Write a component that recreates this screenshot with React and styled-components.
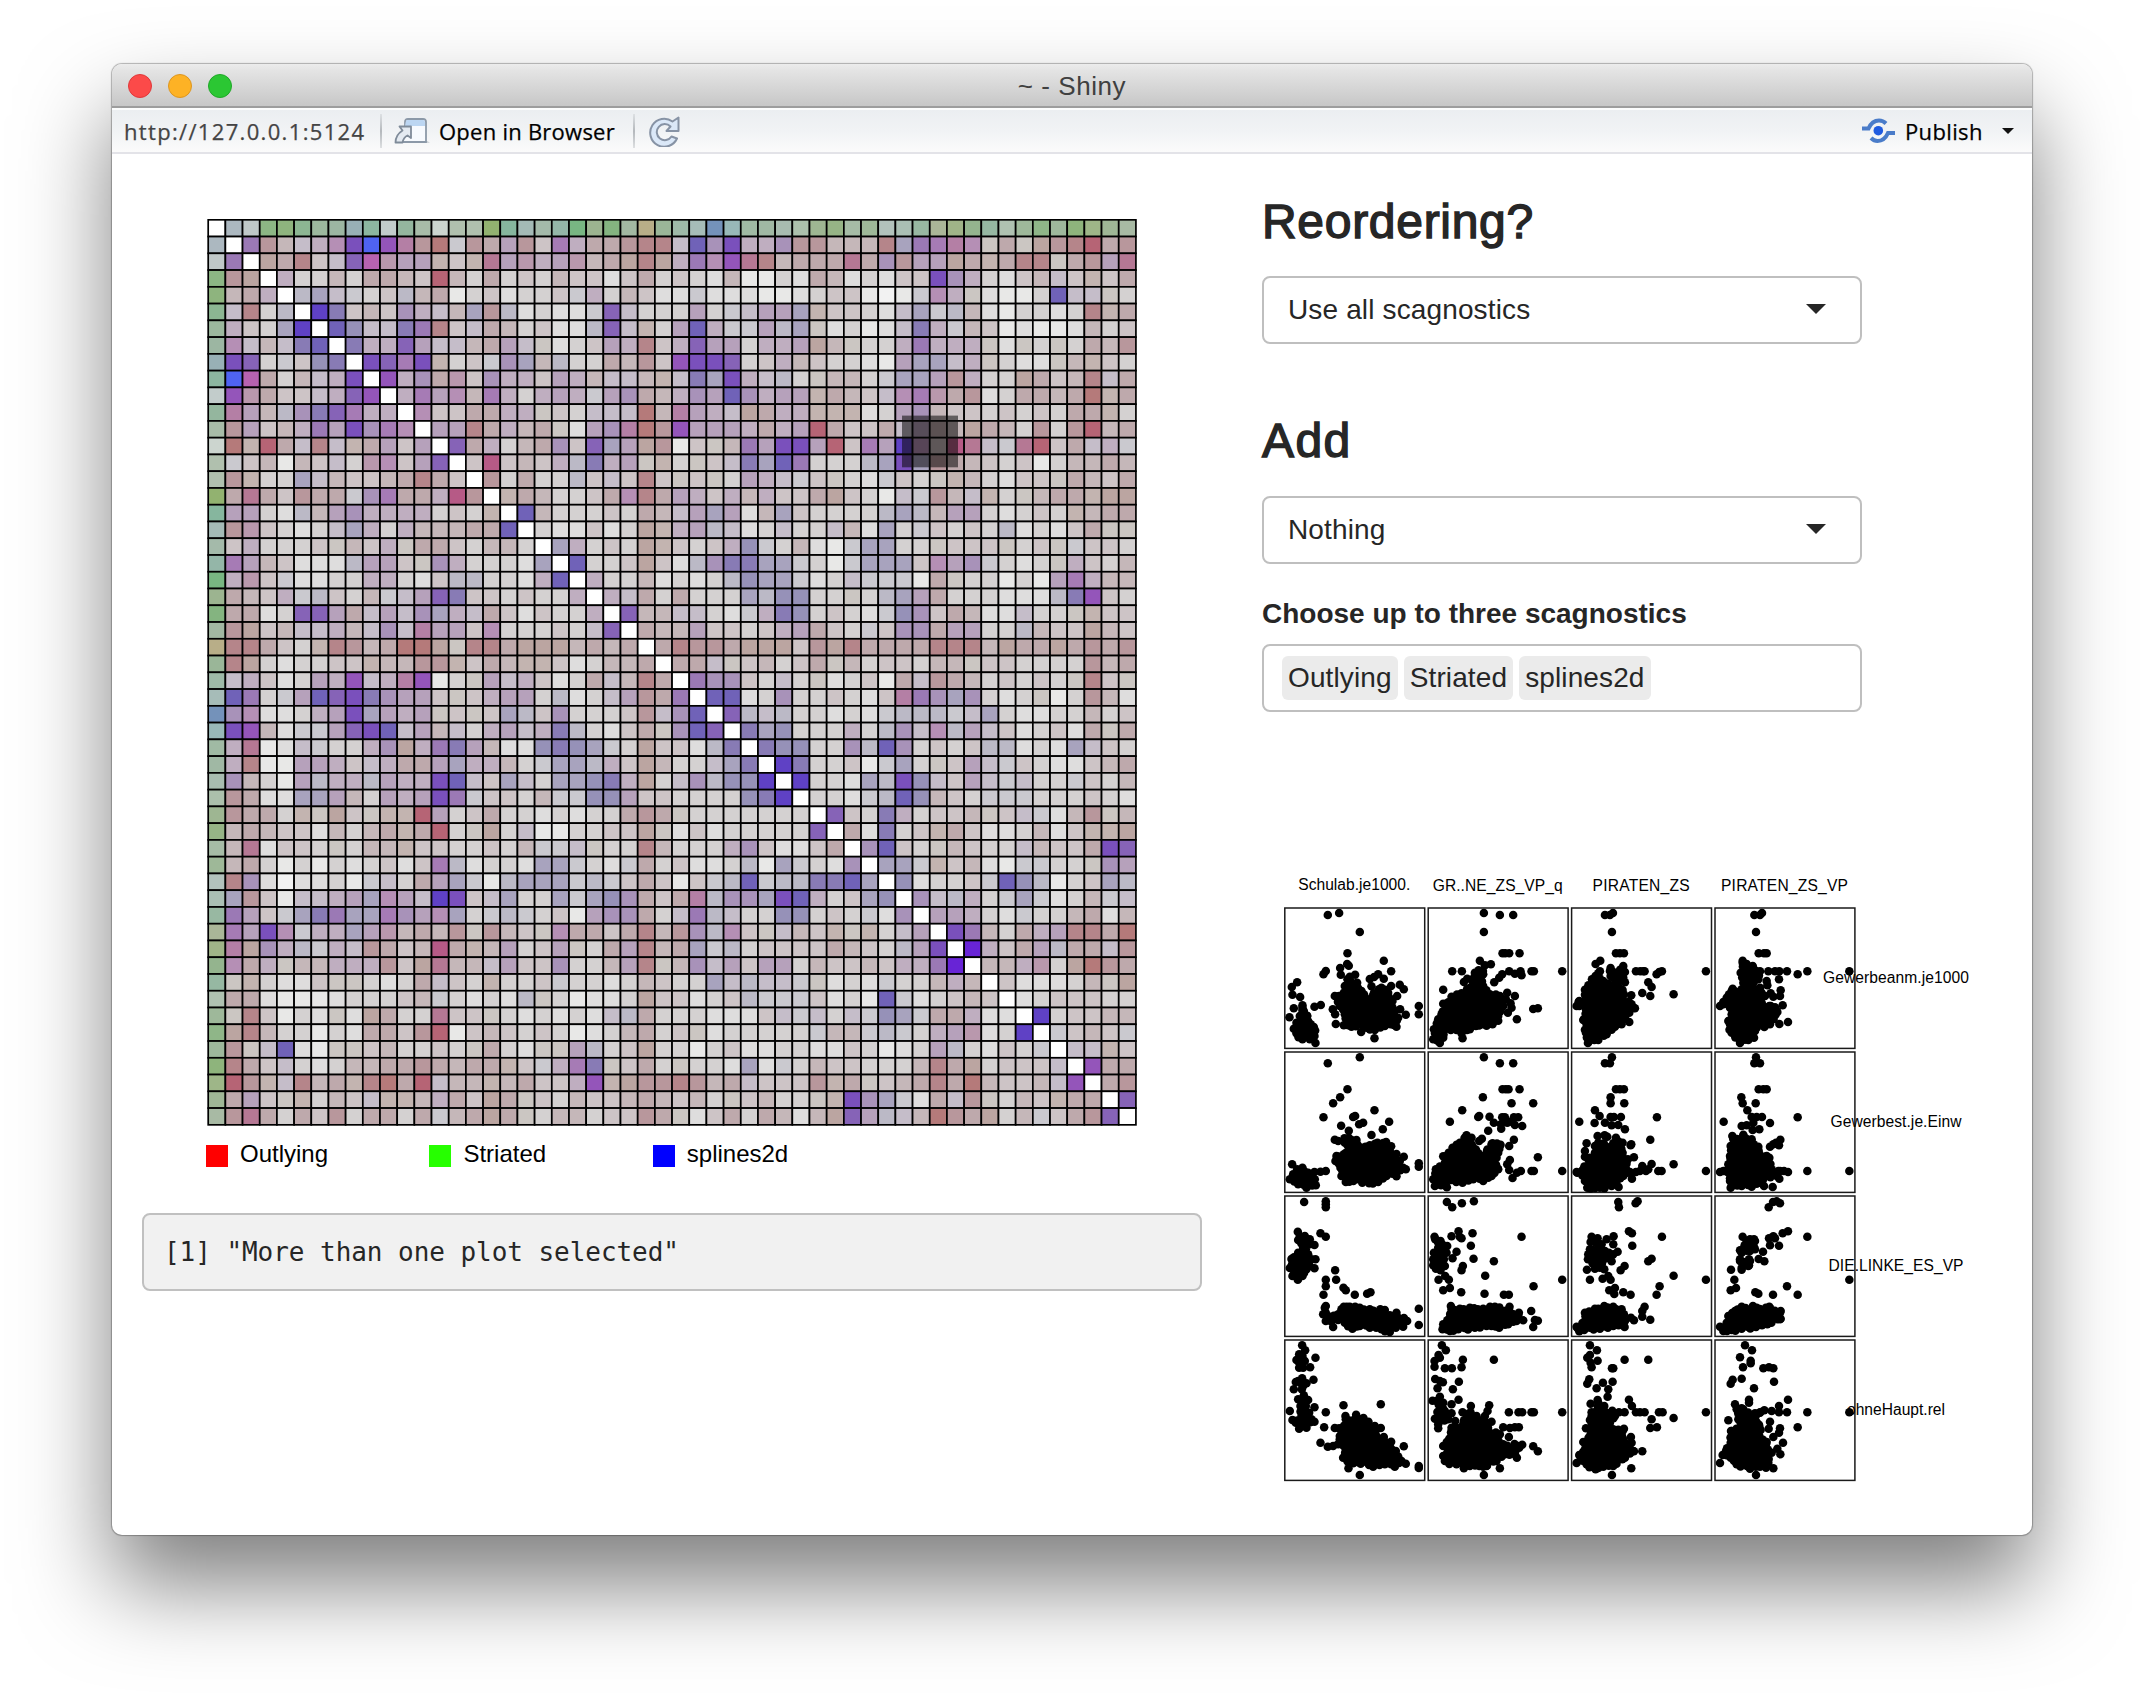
import React from "react";
import styled, { createGlobalStyle } from "styled-components";

const GlobalStyle = createGlobalStyle`
  * { box-sizing: border-box; }
  html, body { margin: 0; padding: 0; background: #fff; }
  body { width: 2144px; height: 1696px; overflow: hidden; font-family: "Liberation Sans", Arial, sans-serif; }
  svg { display: block; flex: none; }
`;

/* ---------- heat map data ---------- */

const palette = {
  O: "#f2f2f2", w: "#e8e8e7", e: "#dedddd", d: "#d4d1d1", l: "#cac9cf", c: "#cdc4c6", g: "#cbc6c2",
  k: "#c5bdc9", t: "#bbb9c6", b: "#c5b7b9", y: "#c3b4b0", a: "#bea9ac", z: "#bba5a1", j: "#bfaec0",
  h: "#b6a1bb", r: "#b8979c", q: "#b5858a", Q: "#b57a7a", R: "#b66475", m: "#a892b9", n: "#9b79b5",
  o: "#b58fb5", M: "#b47fa5", F: "#b57894", f: "#b998ad", s: "#a8a3be", u: "#9691b8", x: "#887bb5",
  v: "#8663b7", V: "#7a50bc", i: "#7062b8", I: "#5f41c5", Z: "#9455ba", P: "#b65a86", B: "#4f63f2",
  p: "#a67bb5", W: "#b762b0", X: "#6824d6",
};

const firstRow = (
  "acb8c0 c0c8c8 8cb684 8eb47e 8cb692 9cb89e 9cb6a2 98b0b6 8cb6a0 c2cccb 94b69e a8bca8 ccd5cf b0c0ae " +
  "b0c0ae 92b270 86b69e a4bab6 a4baaa 94b6a8 78b682 9cb490 84b480 a2b8a2 b8ae88 9ab698 9ebaa8 a6bcb8 " +
  "7492ba 98b8b8 a0baa4 a0b8a4 a8bcb0 acc0ac 9eb692 96b486 a6bca6 9eb898 b2c2bc aabfb4 98b8a2 aab698 " +
  "a0b488 94b48e 96b8a2 afc1b1 9eb89a 8fb688 9eb89c 8eb47c 9eb688 9fb796 a8baa4"
).split(" ");

/* upper triangle, row 1 onwards; every row starts right of the diagonal */
const triangle = [
  "nrbkjoVBZMrQlrahrcpjaarqqkimVjjmrrbbbqsnpMogagzrqRar",
  "zaqckvWfhhycyFhfjhfbazqzjnoZFqbaaaFamrhhzayaqqgarhF",
  "jddbdaabcRbdadcdbccecadcdebwwdeabedeccVmjdecbkcyca",
  "tskldctbawdceddcljdbceeleeewwedccwOwlojgewwdikkgd",
  "Ixcbcmjkbsrtedeelvkdddhdlkhhsyccdeksltbewddedqya",
  "iukkxnqckabdceetvkydhijllhtsgedwekxjlbcwewwebdc",
  "xjjvhkkbahkgedchjqcjvhhdjjhzbgddjnjjjgegdgdabr",
  "VvpVydclmsbtddabrcZVVvdcjbcddewhsskjgdeegbycd",
  "ZjmafcmjjchjbkkbykxsVjktdgbbdlsshrjddzacbqka",
  "jphobpjdjhjlhmabjmhimjhhyabckopfaredaabaQya",
  "occaajjgcdkkkQbMhjkzajjyyyedhmbccdcdcdaayd",
  "hhqajbagehmMQrZhhhjajhRaccakhabzabdrdrRba",
  "vajdbamcvshzrwcgbnhVVhRcphIobPFklFRcakjl",
  "cPcbcjtxjhgydgckxsindddtsVsrabcdcwdbbab",
  "rdaddtckcqcgcgdhjklcgdelcdgybdeccgabca",
  "yabddcaoqahjcjbjccazcdwklrbkydgbaayzz",
  "ibdddcdabkhshebscddddtstbhhdedcdybaa",
  "deecedzyjhtkedkddkbesdlcdcdtedecagg",
  "sjdcdzycdcjuldbewlssddgcccgdcglccd",
  "iddczcetmxxssldwlssscohmldedgjcdb",
  "jddbededtussledklllwagddwdwhpjbb",
  "jkadadddstuuddgdtshadddeeetxZcd",
  "vbbkkdeljxudcdelumcabeekddgycc",
  "abbhccdcjhacdlcmmahhddtbcczbc",
  "aqrrazzzcrzqaaaaqqqbzaazarar",
  "aakgcbdcagbdccdbbgccddddrba",
  "nmmcdkdgedcwakrabdcdcdgqcg",
  "iiedmddcdecMnmsmdedgwdrbe",
  "vtktddedeltttlksdeeddbdc",
  "xsudddjdtmkothkcedceaga",
  "xuuddmtimdcdcttedeskcd",
  "Ixddcwlsdgchklcdeecba",
  "IddestVukchklkddlcdb",
  "ddeltiubcdllldddcde",
  "vcdxjdccbgcklebrgb",
  "aexdcyaceedbecyyz",
  "micdgbcddkbccaVv",
  "sslycbewllddgmh",
  "ueddcliutwdcst",
  "mktjdlsledblk",
  "hhjdelddbaeb",
  "VnbdajhqqaQ",
  "Xjcahtaakr",
  "bbjfdzQra",
  "ceeedbgz",
  "edcccdd",
  "Idccbb",
  "lcbcl",
  "kkyc",
  "Zaa",
  "ar",
  "v",
];

const SIZE = 54;
const CELL_W = 17.18;
const CELL_H = 16.76;

const cellColor = (row, col) => {
  if (row === col) return "#fff";
  const lo = Math.min(row, col);
  const hi = Math.max(row, col);
  if (lo === 0) return "#" + firstRow[hi - 1];
  return palette[triangle[lo - 1][hi - lo - 1]];
};

/* ---------- scatter plot data ---------- */

const columns = [
  { label: "Schulab.je1000.", length: 112, base: 21.3 },
  { label: "GR..NE_ZS_VP_q", length: 130, base: 22 },
  { label: "PIRATEN_ZS", length: 97, base: 22 },
  { label: "PIRATEN_ZS_VP", length: 127, base: 22 },
];
const rows = [
  { label: "Gewerbeanm.je1000", length: 146 },
  { label: "Gewerbest.je.Einw", length: 131 },
  { label: "DIE.LINKE_ES_VP", length: 135 },
  { label: "ohneHaupt.rel", length: 98 },
];
const originX = [45, 475, 35, 465];
const originY = [146, 578, 20, 452];

/* dots: separate points; clouds: outlines of the dense groups */
const panels = [
  [
    {
      dots: "174,167 208,161 270,218 233,282 342,304 237,319 232,314 211,326 364,336 168,335 161,345 213,346 256,346 240,352 325,345 342,358 313,353 300,359 305,381 82,369 66,383 68,406 91,413 72,447 59,474 390,376 402,390 382,410 364,380 134,442 153,437 447,440 447,465 408,466 391,450 195,410 189,450 196,465 198,494 274,518 314,537 380,502 137,551 313,405 98,438 102,455 112,469",
      clouds: [
        "233,360 262,370 275,395 300,425 312,402 335,385 355,400 368,425 375,455 385,475 372,497 345,500 315,512 290,505 275,495 245,502 222,498 225,465 210,440 202,412 222,400 225,380",
        "98,445 112,470 115,485 132,503 134,530 120,540 98,540 80,522 72,508 80,490 90,470",
      ],
    },
    {
      dots: "642,161 690,167 730,167 642,218 698,282 718,282 706,282 749,282 630,304 663,315 547,336 576,336 877,336 785,336 792,336 520,391 582,368 592,358 673,369 688,355 697,345 718,336 735,343 752,336 755,348 741,480 685,484 790,449 804,447 520,433 712,400 735,410 722,432 714,460 700,440 690,410 578,537 725,445 708,420",
      clouds: [
        "645,318 640,345 640,380 660,405 690,412 695,445 685,470 668,495 640,495 618,500 600,510 575,522 560,512 530,508 520,535 510,551 490,540 492,510 505,480 515,465 530,440 545,412 575,402 600,385 612,355 615,340",
      ],
    },
    {
      dots: "135,167 150,167 159,161 156,218 168,282 180,282 192,282 121,304 107,314 152,326 190,320 120,336 152,350 175,340 195,338 180,362 195,369 228,336 250,336 241,336 254,336 438,336 306,336 298,338 290,345 265,369 275,383 247,401 271,410 341,405 214,408 208,488 50,440 56,428 75,391 70,482 222,446 185,495 84,551",
      clouds: [
        "115,342 130,365 165,372 188,392 190,425 215,435 225,447 208,460 190,480 165,502 140,525 115,542 88,545 78,520 80,495 72,480 78,450 58,440 58,425 78,415 80,390 96,360",
        "150,335 190,335 190,355 160,355",
      ],
    },
    {
      dots: "583,167 600,167 606,161 588,218 596,282 612,282 620,282 548,304 560,314 578,320 625,336 645,336 658,336 681,336 742,336 868,336 713,345 657,360 620,365 622,378 662,393 660,410 632,402 640,412 628,440 668,438 652,458 640,478 658,494 684,488 630,495 613,503 480,440 490,428 505,485 540,551 518,388",
      clouds: [
        "548,310 578,322 600,336 595,360 575,358 580,385 600,385 615,410 605,430 620,450 632,440 650,455 640,480 620,495 600,490 585,515 582,535 565,542 540,545 515,520 510,495 515,465 510,445 490,435 500,415 515,395 545,390 550,370 542,340",
      ],
    },
  ],
  [
    {
      dots: "174,612 270,594 233,690 211,714 190,732 161,774 314,753 250,773 256,770 268,795 280,790 214,799 237,814 358,787 339,810 305,827 195,841 402,892 380,884 447,912 447,922 408,930 67,915 168,935 152,937 134,938 323,850 349,848 364,861 380,951",
      clouds: [
        "237,835 260,842 275,865 300,858 325,855 348,855 360,875 375,890 390,905 400,925 378,945 350,950 325,968 298,972 265,960 228,968 215,950 212,925 197,905 200,890 222,885 240,870 225,850 205,845",
        "98,925 115,940 135,960 138,978 110,985 85,975 60,960 70,945 82,930",
      ],
    },
    {
      dots: "642,594 690,612 730,612 698,690 708,690 716,690 749,690 639,714 725,732 790,732 577,753 540,787 625,773 628,770 659,772 697,774 705,774 732,774 745,774 672,790 655,814 694,808 712,790 735,797 757,800 717,788 693,795 732,841 718,860 628,845 636,838 804,894 877,935 785,935 792,935 753,935 741,940 728,956 712,915 720,902 718,932 520,891 531,984 684,928 692,856 668,852 590,828",
      clouds: [
        "590,830 605,835 608,860 640,890 665,855 690,858 685,880 680,895 685,930 665,950 640,965 610,960 578,970 545,962 520,965 528,980 495,980 490,960 498,930 525,910 530,890 548,865 570,850",
      ],
    },
    {
      dots: "156,594 135,612 150,612 168,690 180,690 192,690 152,714 152,732 193,732 105,753 119,770 58,787 104,791 291,774 152,773 162,773 183,773 135,790 155,798 175,797 195,810 271,841 214,855 212,858 222,894 204,900 275,914 341,915 438,935 295,935 305,935 240,935 265,930 247,920 216,958 176,983 80,852 75,875 75,892 113,830 134,828 142,832 50,938 258,935 228,938",
      clouds: [
        "168,835 188,850 188,880 190,905 210,938 190,950 170,965 155,980 120,985 82,985 75,965 52,940 68,932 90,895 105,880 105,860 115,850 140,862 155,865",
      ],
    },
    {
      dots: "588,594 583,612 600,612 596,690 610,690 620,690 544,714 548,732 587,732 562,753 491,787 713,774 630,791 575,773 590,773 606,773 545,800 560,798 578,812 598,810 580,790 661,841 640,855 657,858 630,862 648,850 550,826 517,830 742,935 868,935 684,938 660,935 658,958 625,912 620,890 628,895 612,980 638,983 480,938 490,935 512,985 672,935",
      clouds: [
        "550,830 575,840 595,862 598,885 620,905 635,930 655,935 650,950 620,950 600,970 575,982 545,980 515,980 510,965 518,940 495,935 505,915 510,890 512,860 520,840",
      ],
    },
  ],
  [
    {
      dots: "103,38 168,36 168,45 168,54 84,127 152,132 168,142 134,167 196,243 168,271 199,271 168,291 161,316 221,295 228,303 255,316 292,313 302,309 190,413 447,358 447,407 380,370 137,210 134,237 84,271 68,260 60,236 222,352 65,209 168,350",
      clouds: [
        "90,140 105,140 120,150 120,165 108,180 115,195 125,210 120,230 110,240 98,260 85,268 72,255 70,235 68,210 85,190 100,175 85,152",
        "165,355 168,370 180,382 205,375 215,360 240,352 270,355 300,360 345,362 360,378 385,385 412,395 400,412 378,415 360,428 335,420 300,415 270,410 248,418 225,400 205,392 168,395 160,375",
      ],
    },
    {
      dots: "531,38 547,54 576,42 612,36 566,126 545,141 570,143 575,147 608,132 603,169 755,142 560,187 548,207 611,208 672,216 579,230 575,243 646,259 877,271 791,291 644,313 702,316 717,316 574,309 526,260 506,271 537,271 540,296 520,303 543,350 784,365 795,392 804,394 790,413 719,352 494,142 747,370",
      clouds: [
        "496,150 512,155 532,170 530,190 522,210 525,230 512,243 490,228 490,210 492,190 505,175",
        "545,360 570,358 600,355 640,358 675,352 695,365 718,365 745,378 760,393 740,395 715,405 688,415 650,410 615,415 565,420 540,425 518,420 520,405 540,385",
      ],
    },
    {
      dots: "175,38 177,54 227,42 233,36 207,126 216,132 306,142 217,169 265,216 275,208 194,230 182,243 341,259 438,271 299,291 290,316 212,316 190,309 165,296 148,303 163,314 90,271 128,268 152,271 145,260 81,241 133,240 155,216 173,187 161,141 140,150 95,142 113,147 160,165 254,352 247,365 247,382 271,391 213,385 222,393 194,413 50,412 125,165 92,158 108,160",
      clouds: [
        "90,180 115,178 135,185 160,195 150,208 130,212 120,235 105,238 98,222 84,210 85,195",
        "133,350 160,352 185,360 192,375 195,395 190,408 160,410 120,418 90,415 58,426 52,415 75,395 75,370 105,358",
      ],
    },
    {
      dots: "626,54 639,38 650,36 660,42 684,126 668,132 742,142 548,142 640,141 627,147 645,147 630,168 657,169 609,187 596,209 613,216 540,183 540,210 567,210 513,241 523,271 512,303 528,296 681,291 868,271 713,316 639,316 595,313 586,309 628,352 480,412 545,241 567,228 662,365 660,390 562,160 570,150 582,150",
      clouds: [
        "560,155 585,155 585,180 570,185 545,190",
        "540,215 570,215 565,230 545,235",
        "545,352 590,355 630,357 660,370 662,388 622,405 588,413 545,418 515,422 490,425 500,400 505,380 525,365",
      ],
    },
  ],
  [
    {
      dots: "97,468 106,483 137,505 121,534 95,500 131,571 72,600 96,600 78,578 97,567 221,648 333,645 168,669 163,714 152,760 195,716 208,717 174,772 190,770 402,771 447,830 447,836 270,857 236,837 60,665 134,654 134,697 68,692 102,618 227,680 259,676 281,686 296,697 315,710 333,716 408,823 364,757 342,743",
      clouds: [
        "88,495 98,500 105,515 100,535 88,535 80,512",
        "85,575 110,582 100,590",
        "85,630 115,632 108,650 118,670 125,690 110,715 88,718 78,700 95,680 92,650",
        "228,690 255,690 275,690 290,715 310,712 320,740 340,748 360,765 378,785 395,815 375,832 345,825 310,832 290,818 250,822 220,805 228,780 205,765 210,740 225,720",
      ],
    },
    {
      dots: "516,468 528,483 506,497 510,505 494,515 494,532 579,511 575,534 525,537 546,537 672,511 496,569 510,575 519,579 567,577 503,597 549,600 510,622 566,631 545,645 603,650 658,648 653,665 717,669 746,669 757,669 785,669 792,669 877,669 578,669 602,669 495,688 505,717 665,697 700,714 720,716 735,714 747,714 717,743 790,771 804,786 757,766 748,775 741,805 690,837 642,857 582,837 488,634 556,695 645,680 533,680 650,830",
      clouds: [
        "500,635 520,640 525,665 545,672 535,690 505,705 508,680",
        "590,675 620,680 650,700 660,730 690,735 670,745 700,765 745,770 735,795 705,795 680,815 640,832 600,830 560,825 525,815 520,800 540,785 520,770 545,740 545,715 580,705",
      ],
    },
    {
      dots: "90,468 111,483 82,505 90,497 113,514 95,534 92,520 194,511 265,511 156,537 160,537 88,570 82,583 129,580 158,577 110,597 145,600 143,622 207,631 216,650 92,643 113,632 228,669 240,669 254,669 297,669 308,669 341,686 275,690 271,716 291,714 438,669 194,669 177,669 157,664 78,717 213,743 215,760 247,786 222,786 214,837 156,857 50,821 58,797 70,758 107,840 90,692 95,669 192,718 133,650",
      clouds: [
        "115,640 130,655 145,672 165,680 150,700 160,720 188,725 190,750 210,765 220,785 195,805 160,830 130,832 105,835 80,825 60,800 75,780 75,760 92,735 95,700 95,680 110,665",
      ],
    },
    {
      dots: "555,468 576,483 540,504 572,514 572,522 549,534 610,537 627,534 640,537 545,568 518,571 512,583 642,577 582,597 684,631 567,631 567,640 525,645 545,657 657,650 681,669 657,669 635,665 613,663 600,669 742,669 868,669 713,714 630,697 626,718 660,717 657,730 640,743 669,760 652,778 661,795 640,837 588,857 480,821 488,797 505,693 597,706 513,725 618,835 620,758",
      clouds: [
        "550,660 585,672 600,670 575,690 598,712 598,740 618,765 635,790 625,820 600,832 570,838 530,825 500,798 498,785 512,760 515,725 540,715 535,690 530,660",
      ],
    },
  ],
];

const parse = (text) => text.split(" ").map((pair) => pair.split(",").map(Number));

/* dots every few units along a cloud's outline */
const outlineDots = (points) => {
  const result = [];
  points.forEach(([x, y], index) => {
    const [nx, ny] = points[(index + 1) % points.length];
    const steps = Math.max(1, Math.round(Math.hypot(nx - x, ny - y) / 15));
    for (let step = 0; step < steps; step += 1) {
      const share = step / steps;
      const wobble = step === 0 ? 0 : Math.sin(index * 7.3 + step * 4.1) * 4;
      result.push([x + (nx - x) * share + wobble, y + (ny - y) * share - wobble]);
    }
  });
  return result;
};

/* ---------- frame ---------- */

const Desktop = styled.div`
  width: 2144px;
  height: 1696px;
  padding: 64px 0 0 112px;
  background: #fff;
  overflow: hidden;
`;

const Window = styled.div`
  width: 1920px;
  height: 1471px;
  border-radius: 10px;
  background: #fff;
  display: flex;
  flex-direction: column;
  box-shadow: 0 0 1px 1px rgba(0, 0, 0, 0.28), 0 50px 90px rgba(0, 0, 0, 0.5);
`;

const TitleBar = styled.header`
  height: 44px;
  flex: none;
  display: grid;
  grid-template-columns: 200px 1fr 200px;
  align-items: center;
  padding: 2px 0 0 16px;
  border-radius: 10px 10px 0 0;
  border-bottom: 2px solid #9d9d9d;
  background: linear-gradient(#ececec, #e4e4e4 15%, #c7c7c7);
`;

const Lights = styled.div`
  display: flex;
  gap: 16px;
`;

const Light = styled.span`
  width: 24px;
  height: 24px;
  border-radius: 50%;
  background: ${(p) => p.$fill};
  border: 1px solid ${(p) => p.$edge};
`;

const Title = styled.h1`
  margin: 0;
  padding: 1px 16px 0 0;
  text-align: center;
  font: 400 26px "Liberation Sans", sans-serif;
  letter-spacing: 0.55px;
  color: #404040;
`;

const Toolbar = styled.div`
  height: 46px;
  flex: none;
  display: flex;
  align-items: center;
  padding: 0 18px 0 12px;
  border-top: 2px solid #fcfdfd;
  border-bottom: 2px solid #e3e3e8;
  background: linear-gradient(#ebeef1, #f1f3f5 50%, #fbfbfb);
  font: 400 22px/30px "Open Sans", "Noto Sans", sans-serif;
  color: #000;
  -webkit-text-stroke: 0.25px currentColor;
`;

const Address = styled.span`
  width: 256px;
  color: #444;
  letter-spacing: 1.33px;
  white-space: nowrap;
`;

const Divider = styled.i`
  width: 2px;
  height: 34px;
  margin-right: ${(p) => p.$after}px;
  background: linear-gradient(rgba(160, 165, 170, 0.2), #b4b8bc, rgba(160, 165, 170, 0.3));
`;

const ToolLabel = styled.span`
  margin-left: ${(p) => p.$before}px;
  width: ${(p) => p.$width}px;
  white-space: nowrap;
  letter-spacing: ${(p) => p.$spacing}px;
`;

const Spacer = styled.div`
  flex: 1;
`;

const Caret = styled.i`
  width: 0;
  height: 0;
  margin-bottom: ${(p) => p.$lift || 0}px;
  border: solid transparent;
  border-width: ${(p) => p.$size}px ${(p) => p.$size}px 0;
  border-top-color: ${(p) => p.$color};
`;

/* ---------- page ---------- */

const Page = styled.main`
  flex: 1;
  display: flex;
  padding: 38px 30px 0;
`;

const PlotColumn = styled.section`
  width: 1120px;
  display: flex;
  flex-direction: column;
`;

const HeatFrame = styled.div`
  padding: 27px 0 0 64px;
`;

const Legend = styled.ul`
  display: flex;
  list-style: none;
  margin: 14px 0 0 64px;
  padding: 0;
`;

const LegendItem = styled.li`
  width: 223.4px;
  height: 28px;
  display: flex;
  align-items: flex-start;
  gap: 12px;
  font-size: 24px;
  line-height: 26px;
  color: #000;

  &::before {
    content: "";
    width: 22px;
    height: 22px;
    margin-top: 4px;
    background: ${(p) => p.$color};
  }
`;

const Output = styled.pre`
  width: 1060px;
  height: 78px;
  margin: 44px 0 0;
  padding: 0 20px;
  border: 2px solid #c0c0c0;
  border-radius: 8px;
  background: #f1f1f1;
  color: #262626;
  font: 400 26px/74px "DejaVu Sans Mono", monospace;
  letter-spacing: -0.05px;
`;

const ControlColumn = styled.section`
  width: 740px;
  display: flex;
  flex-direction: column;
`;

const Heading = styled.h2`
  margin: ${(p) => p.$top}px 0 0;
  font-size: 48px;
  font-weight: 400;
  line-height: 52px;
  letter-spacing: ${(p) => p.$spacing}px;
  color: #262626;
  -webkit-text-stroke: 1.4px #262626;
`;

const Field = styled.div`
  width: 600px;
  height: 68px;
  margin-top: ${(p) => p.$top}px;
  padding: 0 34px 0 24px;
  display: flex;
  align-items: center;
  justify-content: space-between;
  border: 2px solid #bfbfbf;
  border-radius: 8px;
  font-size: 28px;
  line-height: 32px;
  letter-spacing: 0.14px;
  color: #262626;
`;

const TagField = styled(Field)`
  padding: 0 18px;
  justify-content: flex-start;
  gap: 6px;
`;

const Tag = styled.span`
  height: 44px;
  padding: 0 6px;
  border-radius: 6px;
  background: #ebebeb;
  line-height: 44px;
  letter-spacing: 0.12px;
`;

const FieldLabel = styled.label`
  margin-top: 34px;
  font-size: 28px;
  font-weight: 700;
  line-height: 32px;
  color: #262626;
`;

const ScatterFrame = styled.div`
  margin-top: 157px;
`;

const ScatterText = styled.text`
  font: 15.6px "Liberation Sans", Arial, sans-serif;
  fill: #000;
`;

/* ---------- icons ---------- */

const OpenIcon = () => (
  <svg width="37" height="26" viewBox="0 0 37 26">
    <path d="M30 22 L36 24.5 L16 25 Z" fill="#9aa3ad" opacity="0.7" />
    <path d="M11 8 V4 Q11 1 14 1 H29 Q32 1 32 4 V24 H9" fill="#f7fafe" stroke="#8c99a8" strokeWidth="1.8" />
    <path d="M12 3 Q12 2 14 2 H29 Q31 2 31 4 V8 H11 Z" fill="#bcd6f2" />
    <path
      d="M5.500 8.500 H17 V20 L13.500 17.500 Q9.500 19.500 8.500 24.500 H1.500 Q1.500 17 8.500 12.500 Z"
      fill="#e4eaf1"
      stroke="#7f8b99"
      strokeWidth="1.8"
      strokeLinejoin="round"
    />
  </svg>
);

const ReloadIcon = () => (
  <svg width="32" height="31" viewBox="0 0 32 31">
    <path
      d="M23.5 5.5 L29.5 1.5 V15 H17.5 L21.5 10.5 A8 8 0 1 0 22.5 20.5 L28 22.5 A14 14 0 1 1 23.5 5.5 Z"
      fill="#dbe8f8"
      stroke="#8793a5"
      strokeWidth="2"
      strokeLinejoin="round"
    />
  </svg>
);

const PublishIcon = () => (
  <svg width="33" height="26" viewBox="0 0 33 26">
    <path d="M0 10.5 H6.5 Q10 2.5 17 2.5 Q21 2.5 24 5.5" fill="none" stroke="#4a7cc9" strokeWidth="4" />
    <path d="M33 15 H26 Q22.500 23 15.500 23 Q12 23 9 20" fill="none" stroke="#4a7cc9" strokeWidth="4" />
    <circle cx="16.300" cy="12.700" r="4.800" fill="#1f5be0" />
  </svg>
);

/* ---------- charts ---------- */

function HeatMap() {
  const cells = [];
  for (let row = 0; row < SIZE; row += 1) {
    for (let col = 0; col < SIZE; col += 1) {
      cells.push(
        <rect key={row * SIZE + col} x={col * CELL_W} y={row * CELL_H} width={CELL_W} height={CELL_H} fill={cellColor(row, col)} />
      );
    }
  }
  return (
    <svg width="932" height="908" viewBox="-2.200 -0.800 932 908">
      <g stroke="#000" strokeWidth="1.700">{cells}</g>
      <rect x="693.800" y="195.800" width="56" height="51.700" fill="#0a0a0a" fillOpacity="0.55" />
    </svg>
  );
}

function ScatterPanel({ row, col }) {
  const { dots, clouds } = panels[row][col];
  const outlines = clouds.map(parse);
  const points = parse(dots).concat(...outlines.map(outlineDots));
  return (
    <g transform={`translate(${22.8 + col * 143.4} ${39 + row * 144})`}>
      <rect width="139.900" height="140.400" fill="none" stroke="#1a1a1a" strokeWidth="1.500" />
      <g transform={`scale(0.33333) translate(${-originX[col]} ${-originY[row]})`}>
        {outlines.map((outline, index) => (
          <polygon key={index} points={outline.map((p) => p.join(",")).join(" ")} />
        ))}
        {points.map(([x, y], index) => (
          <circle key={index} cx={x} cy={y} r="12.800" />
        ))}
      </g>
    </g>
  );
}

function ScatterMatrix() {
  return (
    <svg width="740" height="620" viewBox="0 0 740 620">
      {rows.map((_, row) => columns.map((__, col) => <ScatterPanel key={`${row}-${col}`} row={row} col={col} />))}
      {columns.map((c, i) => (
        <ScatterText key={c.label} x={92.3 + i * 143.4} y={c.base} textAnchor="middle" textLength={c.length}>
          {c.label}
        </ScatterText>
      ))}
      {rows.map((r, i) => (
        <ScatterText key={r.label} x="634" y={114.3 + i * 144} textAnchor="middle" textLength={r.length}>
          {r.label}
        </ScatterText>
      ))}
    </svg>
  );
}

export default function App() {
  return (
    <Desktop>
      <GlobalStyle />
      <Window>
        <TitleBar>
          <Lights>
            <Light $fill="#fc4a49" $edge="#e0383a" />
            <Light $fill="#fdb225" $edge="#dd9620" />
            <Light $fill="#2bc733" $edge="#1fa828" />
          </Lights>
          <Title>~ - Shiny</Title>
        </TitleBar>
        <Toolbar>
          <Address>http://127.0.0.1:5124</Address>
          <Divider $after={12} />
          <OpenIcon />
          <ToolLabel $before={8} $width={194} $spacing={0.25}>
            Open in Browser
          </ToolLabel>
          <Divider $after={14} />
          <ReloadIcon />
          <Spacer />
          <PublishIcon />
          <ToolLabel $before={10} $width={97} $spacing={0.35}>
            Publish
          </ToolLabel>
          <Caret $size={6} $color="#111" />
        </Toolbar>
        <Page>
          <PlotColumn>
            <HeatFrame>
              <HeatMap />
            </HeatFrame>
            <Legend>
              <LegendItem $color="#ff0000">Outlying</LegendItem>
              <LegendItem $color="#26ff00">Striated</LegendItem>
              <LegendItem $color="#0000ff">splines2d</LegendItem>
            </Legend>
            <Output>[1] "More than one plot selected"</Output>
          </PlotColumn>
          <ControlColumn>
            <Heading $top={4} $spacing={0.7}>
              Reordering?
            </Heading>
            <Field $top={28}>
              Use all scagnostics
              <Caret $size={10} $color="#262626" $lift={3} />
            </Field>
            <Heading $top={71} $spacing={1.4}>
              Add
            </Heading>
            <Field $top={29}>
              Nothing
              <Caret $size={10} $color="#262626" $lift={3} />
            </Field>
            <FieldLabel>Choose up to three scagnostics</FieldLabel>
            <TagField $top={14}>
              <Tag>Outlying</Tag>
              <Tag>Striated</Tag>
              <Tag>splines2d</Tag>
            </TagField>
            <ScatterFrame>
              <ScatterMatrix />
            </ScatterFrame>
          </ControlColumn>
        </Page>
      </Window>
    </Desktop>
  );
}
